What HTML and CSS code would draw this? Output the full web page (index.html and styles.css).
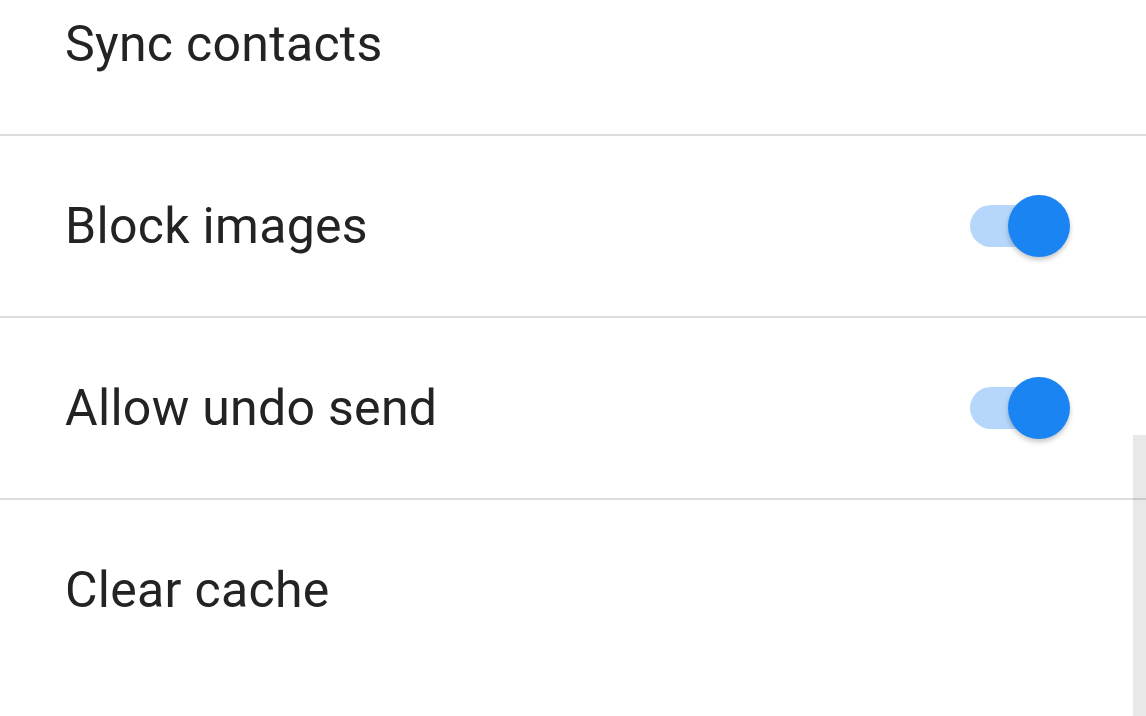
FILE: index.html
```html
<!DOCTYPE html>
<html>
<head>
<meta charset="utf-8">
<link rel="stylesheet" href="styles.css">
</head>
<body>
<div class="settings">
  <div class="row"><span class="label">Sync contacts</span></div>
  <div class="row"><span class="label">Block images</span><span class="switch on"><span class="track"></span><span class="thumb"></span></span></div>
  <div class="row"><span class="label">Allow undo send</span><span class="switch on"><span class="track"></span><span class="thumb"></span></span></div>
  <div class="row last"><span class="label">Clear cache</span></div>
</div>
<div class="scrollbar"></div>
</body>
</html>
```
FILE: styles.css
```css
html, body {
  margin: 0;
  padding: 0;
  background: #ffffff;
  overflow: hidden;
  width: 1146px;
  height: 716px;
}
body {
  font-family: Roboto, "Noto Sans", sans-serif;
  color: #232323;
  position: relative;
}
.settings {
  margin-top: -46px;
  display: flex;
  flex-direction: column;
}
.row {
  height: 180px;
  border-bottom: 2px solid #dedede;
  display: flex;
  align-items: center;
  justify-content: space-between;
  padding: 0 76px 0 65px;
}
.row.last {
  border-bottom: none;
}
.label {
  font-size: 50px;
  letter-spacing: 0.3px;
}
.switch {
  position: relative;
  width: 100px;
  height: 62px;
  display: flex;
  align-items: center;
}
.track {
  width: 82px;
  height: 42px;
  border-radius: 21px;
  background: #b6d6fb;
}
.thumb {
  position: absolute;
  right: 0;
  top: 0;
  width: 62px;
  height: 62px;
  border-radius: 50%;
  background: #1a84f2;
  box-shadow: 0 3px 5px rgba(0,0,0,0.22);
}
.scrollbar {
  position: absolute;
  right: 0;
  top: 435px;
  width: 13px;
  height: 281px;
  background: rgba(0,0,0,0.09);
}
```
